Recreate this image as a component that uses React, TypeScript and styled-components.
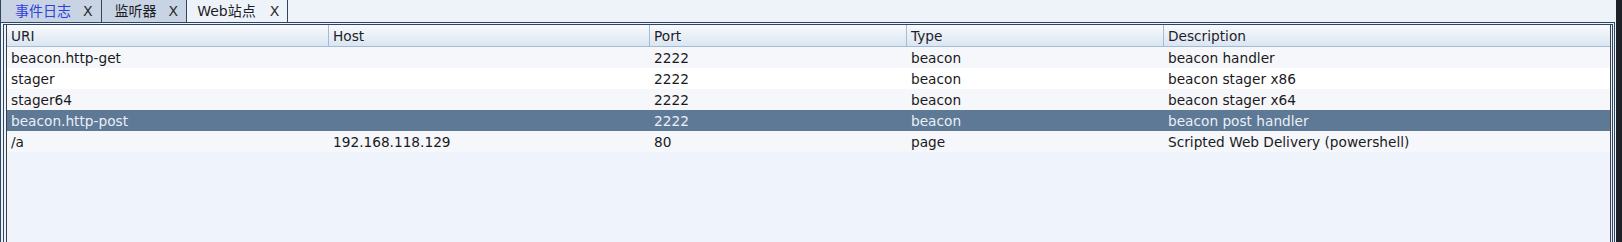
import styled, { createGlobalStyle } from "styled-components";

const GlobalStyle = createGlobalStyle`
  html, body {
    margin: 0;
    padding: 0;
    background: #eef2f9;
  }
  body {
    font-family: "DejaVu Sans", "Noto Sans CJK SC", sans-serif;
    overflow: hidden;
  }
`;

const Window = styled.div`
  width: 1622px;
  height: 242px;
  display: flex;
  background: #eef2f9;
  overflow: hidden;
`;

const Main = styled.div`
  flex: 0 0 1616px;
  display: flex;
  flex-direction: column;
`;

const EdgeStrip = styled.div`
  flex: 1;
  background: #1e2228;
`;

const TabBar = styled.div`
  height: 22px;
  display: flex;
  flex: 0 0 22px;
`;

const Tab = styled.div<{ $selected?: boolean; $first?: boolean }>`
  display: flex;
  align-items: center;
  gap: ${(p) => (p.$selected ? "14px" : "12px")};
  padding: 0 8px 0 ${(p) => (p.$selected ? "10px" : p.$first ? "14px" : "13px")};
  background: ${(p) => (p.$selected ? "#eef2f9" : "#c8d4e3")};
  border-right: 1px solid #2f4560;
  border-left: ${(p) => (p.$first ? "1px solid #2f4560" : "none")};
  font-size: 14px;
  line-height: 22px;
`;

const TabLabel = styled.span<{ $color?: string }>`
  font-family: "DejaVu Sans", "Noto Sans CJK SC", sans-serif;
  color: ${(p) => p.$color || "#1c1c24"};
`;

const TabClose = styled.span`
  font-family: "DejaVu Sans", sans-serif;
  color: #2a2a30;
`;

const Panel = styled.div`
  flex: 1;
  margin-right: 1px;
  border: 1px solid #2c4663;
  border-bottom: none;
  padding: 1px 1px 0 2px;
  display: flex;
`;

const InnerPanel = styled.div`
  flex: 1;
  border: 1px solid #2c4663;
  border-bottom: none;
  padding: 0 1px 0 2px;
  display: flex;
`;

const ScrollPane = styled.div`
  flex: 1;
  border-left: 1px solid #3c3f44;
  border-right: 1px solid #3c3f44;
  background: #eff3fb;
`;

const Grid = styled.div`
  display: grid;
  grid-template-columns: 321px 321px 257px 257px 1fr;
`;

const HeaderCell = styled.div<{ $first?: boolean }>`
  height: 20px;
  padding-top: 1px;
  line-height: 20px;
  padding-left: 4px;
  font-size: 13.7px;
  color: #1e1e2a;
  background: linear-gradient(#f8fafe, #dbe5f0);
  border-bottom: 1px solid #9fbcd8;
  border-left: ${(p) => (p.$first ? "none" : "1px solid #9fbcd8")};
  white-space: nowrap;
`;

const Cell = styled.div<{ $bg: string; $selected?: boolean; $first?: boolean }>`
  height: 20px;
  padding-top: 1px;
  line-height: 20px;
  padding-left: ${(p) => (p.$first ? "4px" : "5px")};
  font-size: 13.7px;
  background: ${(p) => p.$bg};
  color: ${(p) => (p.$selected ? "#eaeff5" : "#1a1a22")};
  white-space: nowrap;
  overflow: hidden;
`;

const columns = ["URI", "Host", "Port", "Type", "Description"];

const sites = [
  ["beacon.http-get", "", "2222", "beacon", "beacon handler"],
  ["stager", "", "2222", "beacon", "beacon stager x86"],
  ["stager64", "", "2222", "beacon", "beacon stager x64"],
  ["beacon.http-post", "", "2222", "beacon", "beacon post handler"],
  ["/a", "192.168.118.129", "80", "page", "Scripted Web Delivery (powershell)"],
];

const selectedRow = 3;

export default function App() {
  return (
    <>
      <GlobalStyle />
      <Window>
        <Main>
          <TabBar>
            <Tab $first>
              <TabLabel $color="#2f3fe0">事件日志</TabLabel>
              <TabClose>X</TabClose>
            </Tab>
            <Tab>
              <TabLabel>监听器</TabLabel>
              <TabClose>X</TabClose>
            </Tab>
            <Tab $selected>
              <TabLabel>Web站点</TabLabel>
              <TabClose>X</TabClose>
            </Tab>
          </TabBar>
          <Panel>
            <InnerPanel>
              <ScrollPane>
                <Grid>
                  {columns.map((c, i) => (
                    <HeaderCell key={c} $first={i === 0}>
                      {c}
                    </HeaderCell>
                  ))}
                  {sites.map((row, r) =>
                    row.map((v, i) => (
                      <Cell
                        key={r + "-" + i}
                        $first={i === 0}
                        $selected={r === selectedRow}
                        $bg={r === selectedRow ? "#5e7996" : r % 2 === 1 ? "#ffffff" : "#f6f7fa"}
                      >
                        {v}
                      </Cell>
                    ))
                  )}
                </Grid>
              </ScrollPane>
            </InnerPanel>
          </Panel>
        </Main>
        <EdgeStrip />
      </Window>
    </>
  );
}
